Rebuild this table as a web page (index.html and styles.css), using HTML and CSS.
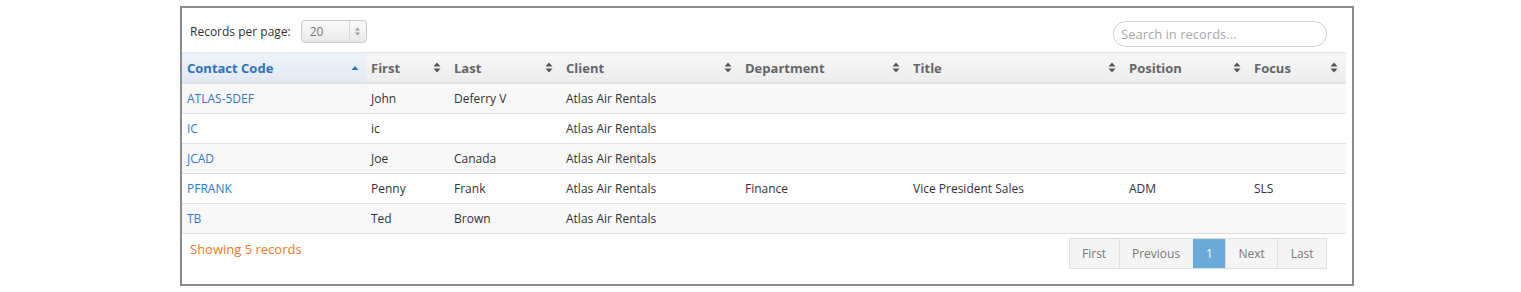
FILE: index.html
```html
<!DOCTYPE html>
<html>
<head>
<meta charset="utf-8">
<link rel="stylesheet" href="styles.css">
</head>
<body>
<div class="panel">
  <div class="toolbar">
    <div class="perpage">
      <span>Records per page:</span>
      <div class="select"><span class="val">20</span><span class="arrows"><svg width="5" height="9" viewBox="0 0 5 9"><path d="M2.5 0.5L5 3.5H0Z M2.5 8.5L5 5.5H0Z" fill="#999"/></svg></span></div>
    </div>
    <div class="search">Search in records...</div>
  </div>
  <table class="grid">
    <colgroup>
      <col style="width:184px"><col style="width:83px"><col style="width:112px"><col style="width:179px"><col style="width:168px"><col style="width:216px"><col style="width:125px"><col style="width:97px">
    </colgroup>
    <thead>
      <tr>
        <th class="sorted"><div class="hc"><span>Contact Code</span><svg width="8" height="6" viewBox="0 0 8 6"><path d="M4 1L7.5 5H0.5Z" fill="#2f72c0"/></svg></div></th>
        <th><div class="hc"><span>First</span><svg class="si" width="8" height="11" viewBox="0 0 8 11"><path d="M4 0.5L7.5 4.5H0.5Z M4 10.5L7.5 6.5H0.5Z" fill="#555"/></svg></div></th>
        <th><div class="hc"><span>Last</span><svg class="si" width="8" height="11" viewBox="0 0 8 11"><path d="M4 0.5L7.5 4.5H0.5Z M4 10.5L7.5 6.5H0.5Z" fill="#555"/></svg></div></th>
        <th><div class="hc"><span>Client</span><svg class="si" width="8" height="11" viewBox="0 0 8 11"><path d="M4 0.5L7.5 4.5H0.5Z M4 10.5L7.5 6.5H0.5Z" fill="#555"/></svg></div></th>
        <th><div class="hc"><span>Department</span><svg class="si" width="8" height="11" viewBox="0 0 8 11"><path d="M4 0.5L7.5 4.5H0.5Z M4 10.5L7.5 6.5H0.5Z" fill="#555"/></svg></div></th>
        <th><div class="hc"><span>Title</span><svg class="si" width="8" height="11" viewBox="0 0 8 11"><path d="M4 0.5L7.5 4.5H0.5Z M4 10.5L7.5 6.5H0.5Z" fill="#555"/></svg></div></th>
        <th><div class="hc"><span>Position</span><svg class="si" width="8" height="11" viewBox="0 0 8 11"><path d="M4 0.5L7.5 4.5H0.5Z M4 10.5L7.5 6.5H0.5Z" fill="#555"/></svg></div></th>
        <th><div class="hc"><span>Focus</span><svg class="si" width="8" height="11" viewBox="0 0 8 11"><path d="M4 0.5L7.5 4.5H0.5Z M4 10.5L7.5 6.5H0.5Z" fill="#555"/></svg></div></th>
      </tr>
    </thead>
    <tbody>
      <tr><td><a>ATLAS-5DEF</a></td><td>John</td><td>Deferry V</td><td>Atlas Air Rentals</td><td></td><td></td><td></td><td></td></tr>
      <tr><td><a>IC</a></td><td>ic</td><td></td><td>Atlas Air Rentals</td><td></td><td></td><td></td><td></td></tr>
      <tr><td><a>JCAD</a></td><td>Joe</td><td>Canada</td><td>Atlas Air Rentals</td><td></td><td></td><td></td><td></td></tr>
      <tr><td><a>PFRANK</a></td><td>Penny</td><td>Frank</td><td>Atlas Air Rentals</td><td>Finance</td><td>Vice President Sales</td><td>ADM</td><td>SLS</td></tr>
      <tr><td><a>TB</a></td><td>Ted</td><td>Brown</td><td>Atlas Air Rentals</td><td></td><td></td><td></td><td></td></tr>
    </tbody>
  </table>
  <div class="footer">
    <div class="count">Showing 5 records</div>
    <div class="pager">
      <span class="pg">First</span><span class="pg">Previous</span><span class="pg active">1</span><span class="pg">Next</span><span class="pg">Last</span>
    </div>
  </div>
</div>
</body>
</html>
```
FILE: styles.css
```css
html, body { margin: 0; padding: 0; background: #fff; }
body { font-family: "Open Sans", "Liberation Sans", sans-serif; font-size: 12px; color: #333; }
.panel {
  margin: 6px 0 0 180px;
  height: 276px;
  border: 2px solid #8c8c8c;
  padding: 0 6px 0 0;
  box-sizing: content-box;
  width: 1164px;
}
.toolbar {
  display: flex;
  justify-content: space-between;
  align-items: center;
  height: 44px;
  padding: 0 19px 0 8px;
}
.perpage { display: flex; align-items: center; gap: 10px; color: #333; padding-top: 2px; }
.select {
  display: flex; align-items: center;
  width: 66px; height: 23px;
  border: 1px solid #c8c8c8; border-radius: 4px;
  background: linear-gradient(#fafafa, #e9e9e9);
  box-sizing: border-box;
}
.select .val { flex: 1; padding-left: 8px; color: #777; }
.select .arrows { width: 16px; height: 100%; border-left: 1px solid #d8d8d8; display: flex; align-items: center; justify-content: center; }
.search {
  width: 214px; height: 26px; box-sizing: border-box;
  border: 1px solid #cfcfcf; border-radius: 13px;
  padding: 4px 7px; color: #a8a8a8; font-size: 13px; line-height: 16px;
  margin-top: 8px;
}
.grid { border-collapse: collapse; table-layout: fixed; width: 1164px; }
.grid th {
  height: 29px; padding: 0 5px; text-align: left;
  font-weight: 700; font-size: 13px; color: #666;
  background: linear-gradient(#f7f7f7, #ececec);
  border-top: 1px solid #e6e6e6;
  border-bottom: 2px solid #e2e2e2;
}
.grid th.sorted { background: linear-gradient(#eef3fa, #e2e9f3); color: #2f72c0; }
.hc { display: flex; justify-content: space-between; align-items: center; }
.hc svg { margin-right: 2px; }
.hc .si { margin-right: 3px; }
.grid td { height: 29px; padding: 0 5px; border-bottom: 1px solid #dedede; white-space: nowrap; }
.grid tbody tr:nth-child(odd) td { background: #f8f8f8; }
.grid a { color: #3478c6; }
.footer { display: flex; justify-content: space-between; align-items: flex-start; padding: 4px 19px 0 8px; }
.count { color: #f07b1e; font-size: 13px; padding-top: 2px; }
.pager { display: flex; border: 1px solid #e0e0e0; margin-top: 0; }
.pg {
  height: 29px; line-height: 29px; padding: 0 12.4px;
  background: #f5f5f5; color: #777; border-left: 1px solid #e0e0e0;
}
.pg:first-child { border-left: none; }
.pg.active { background: #6aaad9; color: #fff; border-left-color: #6aaad9; }
```
